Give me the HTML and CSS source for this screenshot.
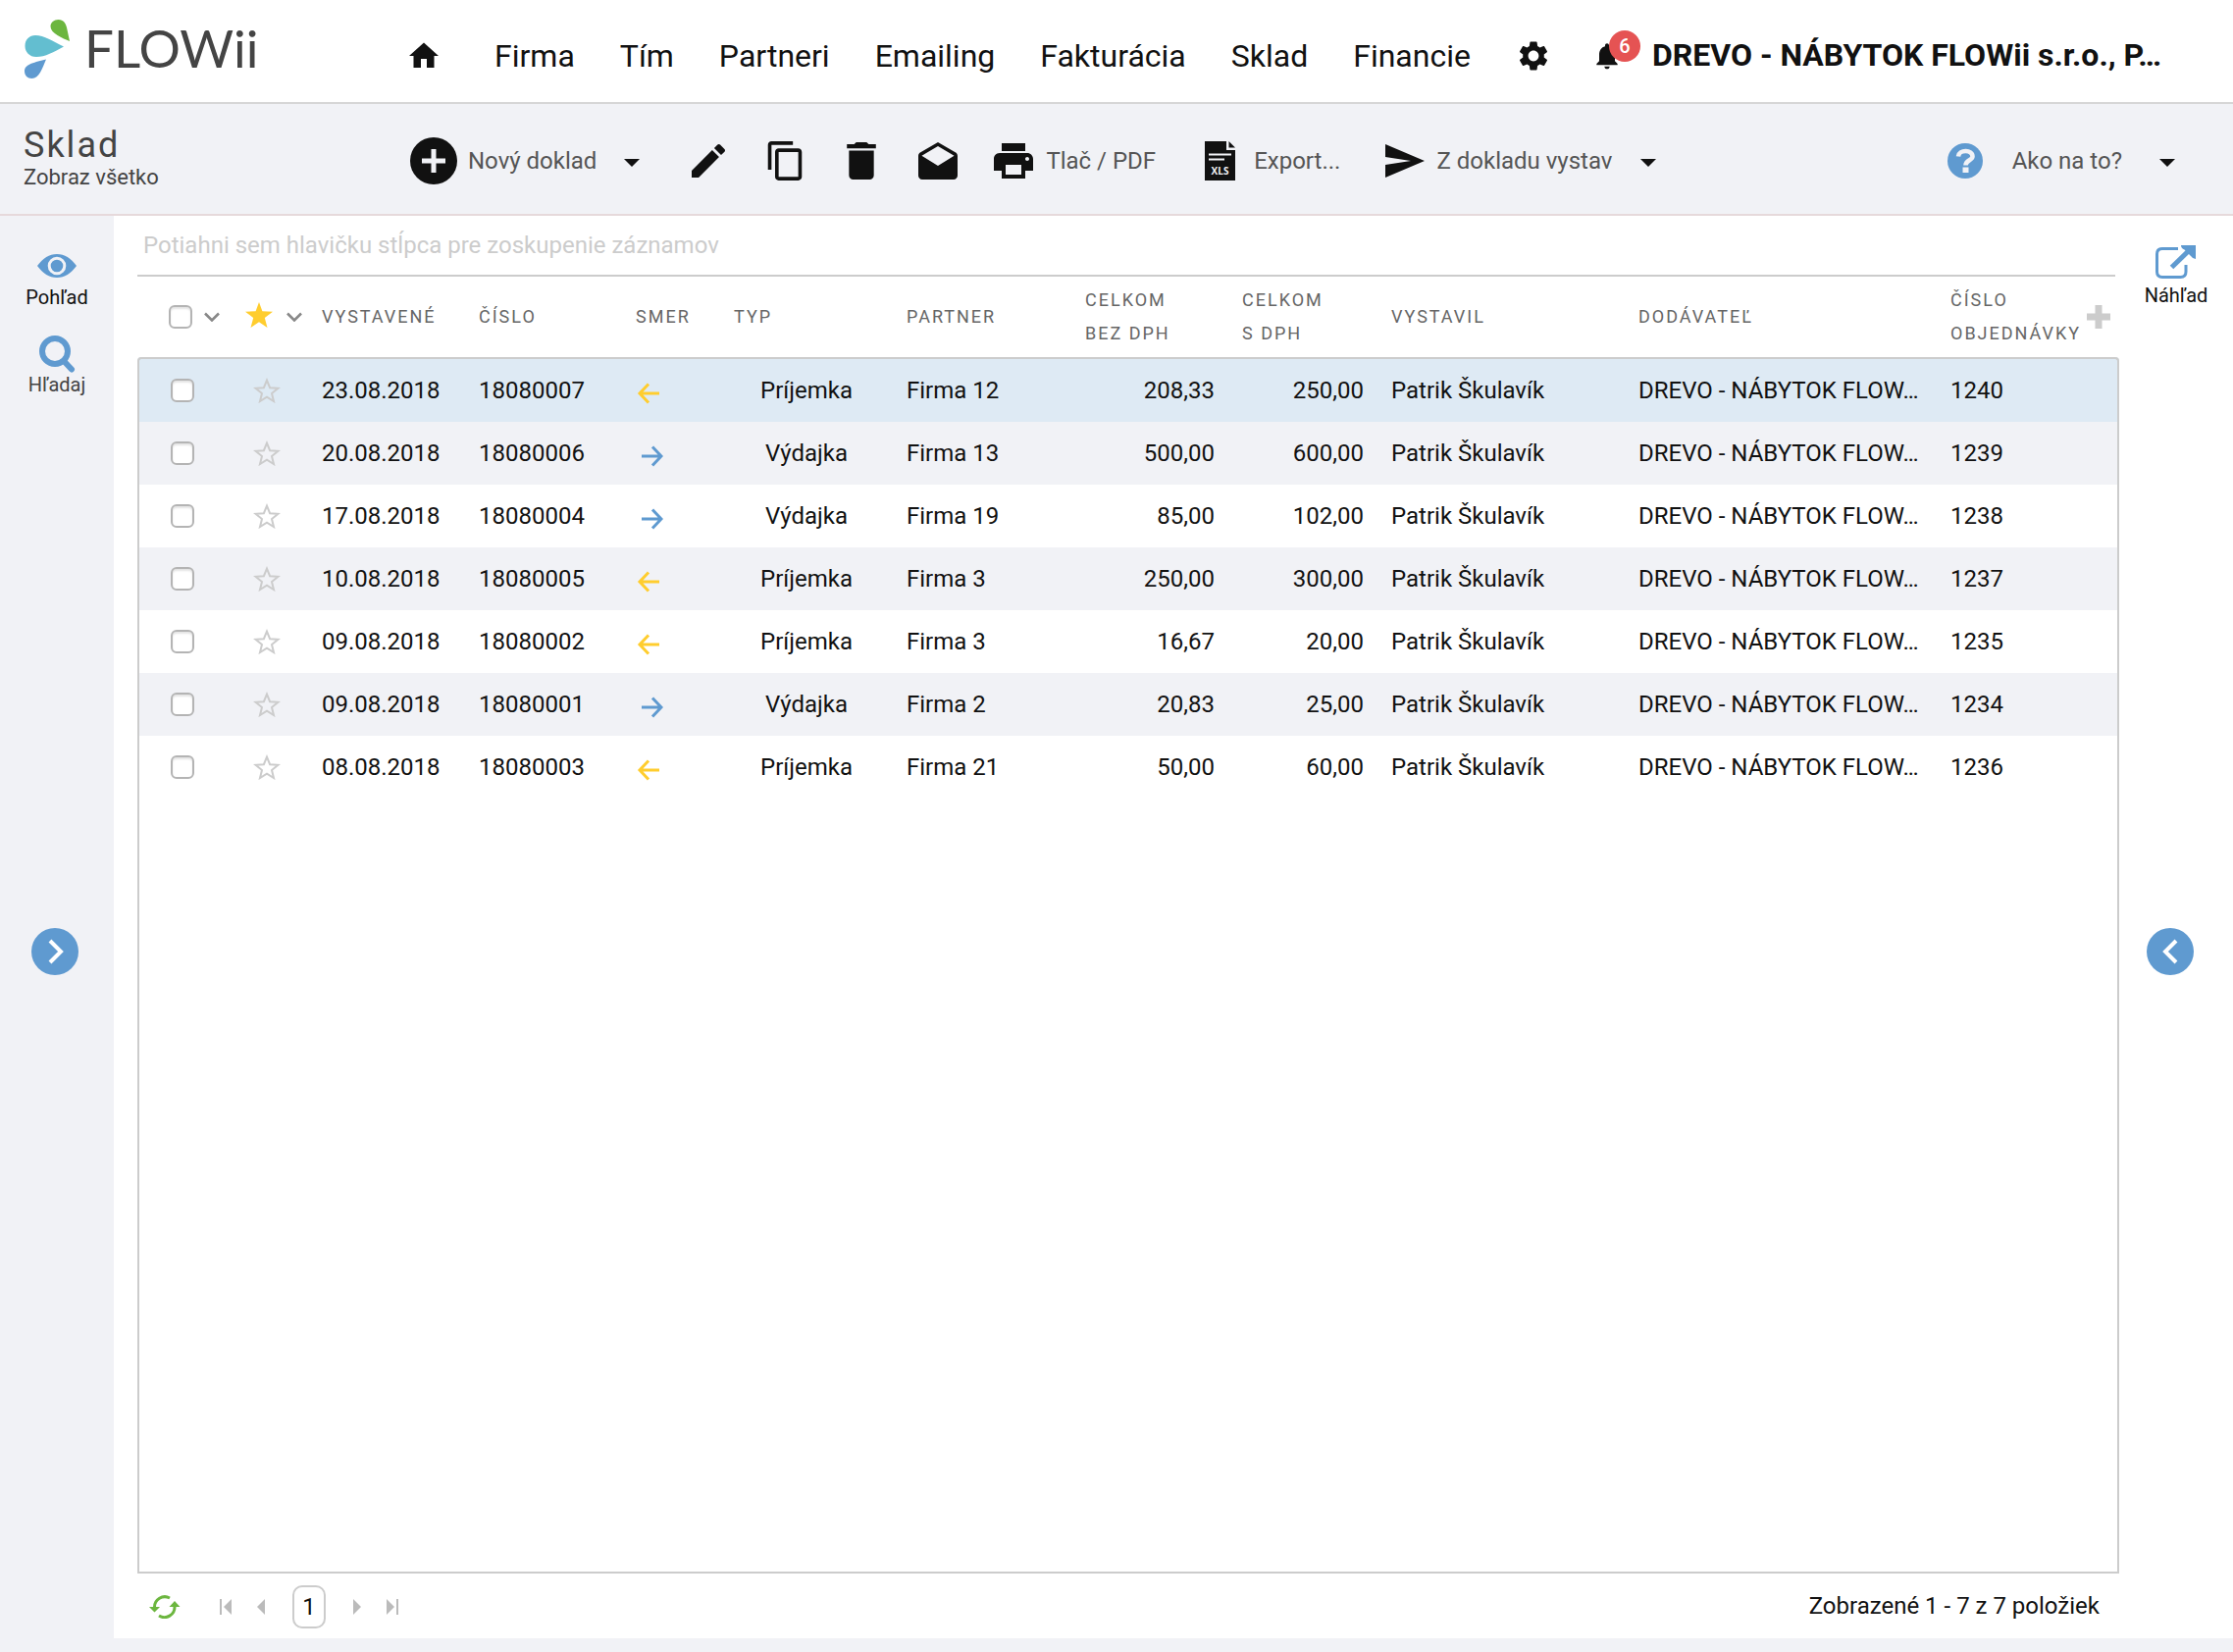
FILE: index.html
```html
<!DOCTYPE html>
<html lang="sk">
<head>
<meta charset="utf-8">
<title>Sklad</title>
<meta name="viewport" content="width=device-width, initial-scale=1">
<link rel="stylesheet" href="styles.css">
</head>
<body>
<svg class="sprite" aria-hidden="true">
  <symbol id="star" viewBox="0 0 28 26"><path d="M14 2.6 17.1 10.2 25.4 10.8 19 16 21 24 14 19.6 7 24 9 16 2.6 10.8 10.9 10.2Z" fill="none" stroke="#ccc" stroke-width="2"/></symbol>
  <symbol id="in" viewBox="0 0 28 28"><path d="M24 17H4M13 7.500 4 17 13 26.500" fill="none" stroke="#ffcd2e" stroke-width="3"/></symbol>
  <symbol id="out" viewBox="0 0 28 28"><path d="M6 17H26M17 7.500 26 17 17 26.500" fill="none" stroke="#5f9ad0" stroke-width="3"/></symbol>
  <symbol id="chevron" viewBox="0 0 16 10"><path d="M1 1.5 8 8.5 15 1.5" fill="none" stroke="#888" stroke-width="2.6"/></symbol>
  <symbol id="caret" viewBox="0 0 16 8"><path d="M0 0H16L8 8Z" fill="#111"/></symbol>
</svg>

<header class="topbar">
  <a class="brand" href="#">
    <svg width="244" height="72" viewBox="0 0 244 72" role="img" aria-label="FLOWii">
      <path d="M47 22C40 19 27.500 14 27.500 7C27.500 3 31 0 35.500 0C41 0 43 4 44 8Z" fill="#6cb63f"/>
      <path d="M41 27.500C31 33 22 38 13 38C6 38 1.500 33 1.500 27C1.500 20 6 16 12 16C21 16 30 22 41 27.500Z" fill="#63bed0"/>
      <path d="M23 40.500C19 50 16 60 8.500 60C4 60 1 57 1 52.500C1 45 12 43.500 23 40.500Z" fill="#5f9ad0"/>
      <text class="brand-text" x="62" y="49">FLOWii</text>
    </svg>
  </a>
  <nav class="nav">
    <a class="nav-home" href="#" aria-label="Domov"><svg width="36" height="36" viewBox="0 0 24 24"><path d="M10 20v-6h4v6h5v-8h3L12 3 2 12h3v8z"/></svg></a>
    <a href="#">Firma</a>
    <a href="#">Tím</a>
    <a href="#">Partneri</a>
    <a href="#">Emailing</a>
    <a href="#">Fakturácia</a>
    <a href="#">Sklad</a>
    <a href="#">Financie</a>
    <a href="#" aria-label="Nastavenia"><svg width="36" height="36" viewBox="0 0 24 24"><path d="M19.140 12.940c.04-.3.06-.61.06-.94 0-.32-.02-.64-.07-.94l2.030-1.580c.18-.14.23-.41.12-.61l-1.920-3.320c-.12-.22-.37-.29-.59-.22l-2.390.96c-.5-.38-1.030-.7-1.620-.94l-.36-2.540c-.04-.24-.24-.41-.48-.41h-3.840c-.24 0-.43.17-.47.41l-.36 2.540c-.59.24-1.130.57-1.620.94l-2.390-.96c-.22-.08-.47 0-.59.22L2.740 8.870c-.12.21-.08.47.12.61l2.030 1.580c-.05.3-.09.63-.09.94s.02.64.07.94l-2.030 1.580c-.18.14-.23.41-.12.61l1.920 3.320c.12.22.37.29.59.22l2.390-.96c.5.38 1.030.7 1.620.94l.36 2.540c.05.24.24.41.48.41h3.840c.24 0 .44-.17.47-.41l.36-2.540c.59-.24 1.130-.56 1.620-.94l2.390.96c.22.08.47 0 .59-.22l1.920-3.320c.12-.22.07-.47-.12-.61l-2.010-1.580zM12 15.600c-1.980 0-3.600-1.620-3.600-3.600s1.620-3.600 3.600-3.600 3.600 1.620 3.600 3.600-1.620 3.600-3.600 3.600z"/></svg></a>
  </nav>
  <a class="bell" href="#" aria-label="Upozornenia"><svg width="32" height="32" viewBox="0 0 24 24"><path d="M12 22c1.100 0 2-.9 2-2h-4c0 1.100.89 2 2 2zm6-6v-5c0-3.070-1.640-5.640-4.500-6.320V4c0-.83-.67-1.500-1.500-1.500s-1.500.67-1.500 1.500v.68C7.630 5.360 6 7.920 6 11v5l-2 2v1h16v-1l-2-2z"/></svg><span class="badge">6</span></a>
  <a class="account" href="#">DREVO - NÁBYTOK FLOWii s.r.o., P…</a>
</header>

<section class="toolbar">
  <div class="heading">
    <h1>Sklad</h1>
    <p>Zobraz všetko</p>
  </div>
  <div class="actions">
    <button class="tool tool-new" type="button">
      <svg width="48" height="48" viewBox="0 0 48 48"><circle cx="24" cy="24" r="24"/><path d="M24 12V36M12 24H36" stroke="#f1f2f6" stroke-width="5"/></svg>
      <span>Nový doklad</span>
      <svg class="caret" width="16" height="8"><use href="#caret"/></svg>
    </button>
    <button class="tool-icon" type="button" aria-label="Upraviť"><svg width="34" height="34" viewBox="3 3 18 18"><path d="M3 17.250V21h3.750L17.810 9.940l-3.750-3.750L3 17.250zM20.710 7.040c.39-.39.39-1.020 0-1.410l-2.340-2.340c-.39-.39-1.020-.39-1.410 0l-1.830 1.830 3.750 3.750 1.830-1.830z"/></svg></button>
    <button class="tool-icon" type="button" aria-label="Kopírovať"><svg width="36" height="40" viewBox="2 1 19 22"><path d="M16 1H4c-1.100 0-2 .9-2 2v14h2V3h12V1zm3 4H8c-1.100 0-2 .9-2 2v14c0 1.100.9 2 2 2h11c1.100 0 2-.9 2-2V7c0-1.100-.9-2-2-2zm0 16H8V7h11v14z"/></svg></button>
    <button class="tool-icon" type="button" aria-label="Vymazať"><svg width="30" height="38" viewBox="5 3 14 18"><path d="M6 19c0 1.100.9 2 2 2h8c1.100 0 2-.9 2-2V7H6v12zM19 4h-3.500l-1-1h-5l-1 1H5v2h14V4z"/></svg></button>
    <button class="tool-icon" type="button" aria-label="Odoslať e-mailom"><svg width="40" height="38" viewBox="2 1 20 19"><path d="M21.990 8c0-.72-.37-1.350-.94-1.700L12 1 2.950 6.300C2.380 6.650 2 7.280 2 8v10c0 1.100.9 2 2 2h16c1.100 0 2-.9 2-2l-.01-10zM12 13 3.740 7.840 12 3l8.260 4.840L12 13z"/></svg></button>
    <button class="tool tool-print" type="button">
      <svg width="40" height="36" viewBox="2 3 20 18"><path d="M19 8H5c-1.660 0-3 1.340-3 3v6h4v4h12v-4h4v-6c0-1.660-1.340-3-3-3zm-3 11H8v-5h8v5zm3-7c-.55 0-1-.45-1-1s.45-1 1-1 1 .45 1 1-.45 1-1 1zm-1-9H6v4h12V3z"/></svg>
      <span>Tlač / PDF</span>
    </button>
    <button class="tool tool-export" type="button">
      <svg width="31" height="40" viewBox="0 0 31 40"><path d="M0 0H22V9H31V40H0Z"/><path d="M24.500 0 31 6.500H24.500Z"/><path d="M4 13.500H27M4 18.500H20" stroke="#f1f2f6" stroke-width="2"/><text class="xls" x="15.500" y="34" text-anchor="middle">XLS</text></svg>
      <span>Export...</span>
    </button>
    <button class="tool tool-send" type="button">
      <svg width="40" height="34" viewBox="0 0 40 34"><path d="M0 0 40 17 0 34V21L26 17 0 13Z"/></svg>
      <span>Z dokladu vystav</span>
      <svg class="caret" width="16" height="8"><use href="#caret"/></svg>
    </button>
  </div>
  <button class="tool tool-help" type="button">
    <svg width="36" height="36" viewBox="0 0 36 36"><circle cx="18" cy="18" r="18" fill="#5f9ad0"/><path d="M11 13.500C11.500 6.500 25.500 6 25.500 13.500C25.500 17.500 18.500 17 18.500 22.500" fill="none" stroke="#f1f2f6" stroke-width="4.600"/><path d="M15.500 24.500H21.500V30H15.500Z" fill="#f1f2f6"/></svg>
    <span>Ako na to?</span>
    <svg class="caret" width="16" height="8"><use href="#caret"/></svg>
  </button>
</section>

<div class="workspace">
  <aside class="side side-left">
    <button class="side-item" type="button">
      <svg width="40" height="32" viewBox="0 0 40 32"><path d="M0 12C6 4 12 0 20 0S34 4 40 12C34 20 28 24 20 24S6 20 0 12Z" fill="#5f9ad0"/><circle cx="20" cy="12" r="7.800" fill="#5f9ad0" stroke="#f1f2f6" stroke-width="3"/></svg>
      <span>Pohľad</span>
    </button>
    <button class="side-item side-muted" type="button">
      <svg width="38" height="38" viewBox="0 0 38 38"><circle cx="17" cy="16" r="13" fill="none" stroke="#5f9ad0" stroke-width="6"/><path d="M27 27 34 34.500" stroke="#5f9ad0" stroke-width="6" stroke-linecap="round"/></svg>
      <span>Hľadaj</span>
    </button>
  </aside>

  <main class="content">
    <p class="group-hint">Potiahni sem hlavičku stĺpca pre zoskupenie záznamov</p>
    <table class="grid">
      <colgroup>
        <col class="w-check"><col class="w-star"><col class="w-date"><col class="w-date"><col class="w-dir"><col class="w-type"><col class="w-partner"><col class="w-net"><col class="w-gross"><col class="w-author"><col><col class="w-order">
      </colgroup>
      <thead>
        <tr>
          <th><div class="head-tools"><input class="check" type="checkbox" aria-label="Označiť všetko"><svg width="16" height="10"><use href="#chevron"/></svg></div></th>
          <th><div class="head-tools head-star"><svg width="28" height="30" viewBox="0 0 28 30"><path d="M14 0 17.400 9.200 28 9.800 19.800 16 22.500 26 14 20.300 5.500 26 8.200 16 0 9.800 10.600 9.200Z" fill="#ffcd2e"/></svg><svg width="16" height="10"><use href="#chevron"/></svg></div></th>
          <th>VYSTAVENÉ</th>
          <th>ČÍSLO</th>
          <th>SMER</th>
          <th>TYP</th>
          <th>PARTNER</th>
          <th>CELKOM<br>BEZ DPH</th>
          <th>CELKOM<br>S DPH</th>
          <th>VYSTAVIL</th>
          <th>DODÁVATEĽ</th>
          <th><div class="head-last"><span>ČÍSLO<br>OBJEDNÁVKY</span><button type="button" aria-label="Pridať stĺpec"><svg width="26" height="26" viewBox="0 0 26 26"><path d="M13 1V25M1 13H25" stroke="#ccc" stroke-width="7"/></svg></button></div></th>
        </tr>
      </thead>
      <tbody>
        <tr class="selected"><td class="mid"><input class="check" type="checkbox" aria-label="Označiť 18080007"></td><td class="mid"><svg width="28" height="26"><use href="#star"/></svg></td><td>23.08.2018</td><td>18080007</td><td><svg width="28" height="28"><use href="#in"/></svg></td><td class="mid">Príjemka</td><td>Firma 12</td><td class="num">208,33</td><td class="num">250,00</td><td>Patrik Škulavík</td><td>DREVO - NÁBYTOK FLOW…</td><td>1240</td></tr>
        <tr><td class="mid"><input class="check" type="checkbox" aria-label="Označiť 18080006"></td><td class="mid"><svg width="28" height="26"><use href="#star"/></svg></td><td>20.08.2018</td><td>18080006</td><td><svg width="28" height="28"><use href="#out"/></svg></td><td class="mid">Výdajka</td><td>Firma 13</td><td class="num">500,00</td><td class="num">600,00</td><td>Patrik Škulavík</td><td>DREVO - NÁBYTOK FLOW…</td><td>1239</td></tr>
        <tr><td class="mid"><input class="check" type="checkbox" aria-label="Označiť 18080004"></td><td class="mid"><svg width="28" height="26"><use href="#star"/></svg></td><td>17.08.2018</td><td>18080004</td><td><svg width="28" height="28"><use href="#out"/></svg></td><td class="mid">Výdajka</td><td>Firma 19</td><td class="num">85,00</td><td class="num">102,00</td><td>Patrik Škulavík</td><td>DREVO - NÁBYTOK FLOW…</td><td>1238</td></tr>
        <tr><td class="mid"><input class="check" type="checkbox" aria-label="Označiť 18080005"></td><td class="mid"><svg width="28" height="26"><use href="#star"/></svg></td><td>10.08.2018</td><td>18080005</td><td><svg width="28" height="28"><use href="#in"/></svg></td><td class="mid">Príjemka</td><td>Firma 3</td><td class="num">250,00</td><td class="num">300,00</td><td>Patrik Škulavík</td><td>DREVO - NÁBYTOK FLOW…</td><td>1237</td></tr>
        <tr><td class="mid"><input class="check" type="checkbox" aria-label="Označiť 18080002"></td><td class="mid"><svg width="28" height="26"><use href="#star"/></svg></td><td>09.08.2018</td><td>18080002</td><td><svg width="28" height="28"><use href="#in"/></svg></td><td class="mid">Príjemka</td><td>Firma 3</td><td class="num">16,67</td><td class="num">20,00</td><td>Patrik Škulavík</td><td>DREVO - NÁBYTOK FLOW…</td><td>1235</td></tr>
        <tr><td class="mid"><input class="check" type="checkbox" aria-label="Označiť 18080001"></td><td class="mid"><svg width="28" height="26"><use href="#star"/></svg></td><td>09.08.2018</td><td>18080001</td><td><svg width="28" height="28"><use href="#out"/></svg></td><td class="mid">Výdajka</td><td>Firma 2</td><td class="num">20,83</td><td class="num">25,00</td><td>Patrik Škulavík</td><td>DREVO - NÁBYTOK FLOW…</td><td>1234</td></tr>
        <tr><td class="mid"><input class="check" type="checkbox" aria-label="Označiť 18080003"></td><td class="mid"><svg width="28" height="26"><use href="#star"/></svg></td><td>08.08.2018</td><td>18080003</td><td><svg width="28" height="28"><use href="#in"/></svg></td><td class="mid">Príjemka</td><td>Firma 21</td><td class="num">50,00</td><td class="num">60,00</td><td>Patrik Škulavík</td><td>DREVO - NÁBYTOK FLOW…</td><td>1236</td></tr>
      </tbody>
    </table>
    <div class="grid-rest"></div>
    <footer class="pager">
      <button class="refresh" type="button" aria-label="Obnoviť"><svg width="32" height="24" viewBox="0 0 32 24"><path d="M21 3A10.500 10.500 0 0 0 5.500 12.500M10 21A10.500 10.500 0 0 0 26 11.500" fill="none" stroke="#6cb63f" stroke-width="3"/><path d="M0 12H11L5.500 17.500ZM20.500 12H31.500L26 6Z" fill="#6cb63f"/></svg></button>
      <button type="button" aria-label="Prvá strana"><svg width="12" height="16" viewBox="0 0 12 16"><path d="M0 0H2V16H0ZM12 0V16L4 8Z"/></svg></button>
      <button type="button" aria-label="Predchádzajúca strana"><svg width="8" height="16" viewBox="0 0 8 16"><path d="M8 0V16L0 8Z"/></svg></button>
      <button class="page" type="button">1</button>
      <button type="button" aria-label="Nasledujúca strana"><svg width="8" height="16" viewBox="0 0 8 16"><path d="M0 0V16L8 8Z"/></svg></button>
      <button type="button" aria-label="Posledná strana"><svg width="12" height="16" viewBox="0 0 12 16"><path d="M10 0H12V16H10ZM0 0V16L8 8Z"/></svg></button>
      <span class="summary">Zobrazené 1 - 7 z 7 položiek</span>
    </footer>
  </main>

  <aside class="side side-right">
    <button class="side-item" type="button">
      <svg width="42" height="40" viewBox="0 0 42 40"><path d="M23 4.500H7Q1.500 4.500 1.500 10V28Q1.500 33.500 7 33.500H25.500Q31 33.500 31 28V21" fill="none" stroke="#5f9ad0" stroke-width="3"/><path d="M16.500 23.500 34 6.500" stroke="#5f9ad0" stroke-width="5"/><path d="M26 1H41V15Q38 15 36 12L29.500 5.500Q26 4 26 1Z" fill="#5f9ad0"/></svg>
      <span>Náhľad</span>
    </button>
  </aside>

  <button class="handle handle-left" type="button" aria-label="Rozbaliť ľavý panel"><svg width="48" height="48" viewBox="0 0 48 48"><path d="M19 13 30 24 19 35"/></svg></button>
  <button class="handle handle-right" type="button" aria-label="Rozbaliť pravý panel"><svg width="48" height="48" viewBox="0 0 48 48"><path d="M30 13 19 24 30 35"/></svg></button>
</div>
</body>
</html>
```
FILE: styles.css
```css
* { box-sizing: border-box; }

body {
  margin: 0;
  min-height: 100vh;
  display: flex;
  flex-direction: column;
  background: #f1f2f6;
  color: #111;
  font-family: Roboto, "Liberation Sans", sans-serif;
  font-size: 24px;
  line-height: 32px;
}

h1, p { margin: 0; font-weight: 400; }
a { color: inherit; text-decoration: none; }
svg { display: block; flex: none; }

button {
  margin: 0;
  padding: 0;
  border: 0;
  background: none;
  color: inherit;
  font: inherit;
  cursor: pointer;
}

.sprite { position: absolute; width: 0; height: 0; }

/* Top navigation */
.topbar {
  display: flex;
  align-items: center;
  min-height: 106px;
  padding-top: 8px;
  border-bottom: 2px solid #d6d6d6;
  background: #fff;
  font-size: 32px;
  line-height: 40px;
}
.brand { flex: none; width: 414px; padding-left: 24px; }
.brand svg { overflow: visible; }
.brand-text { font-family: Lato, sans-serif; font-size: 53px; fill: #444; }
.nav { display: flex; align-items: center; gap: 46px; padding-top: 2px; fill: #111; }
.nav-home { margin-right: 8px; }
.bell { position: relative; margin-left: 41px; padding-top: 2px; fill: #111; }
.badge {
  position: absolute;
  top: -8px;
  left: 18px;
  width: 32px;
  height: 32px;
  border-radius: 50%;
  background: #e55353;
  color: #fff;
  font-size: 20px;
  font-weight: 500;
  line-height: 32px;
  text-align: center;
}
.account { margin-left: 30px; font-weight: 700; white-space: nowrap; }

/* Document toolbar */
.toolbar {
  display: flex;
  align-items: center;
  min-height: 114px;
  padding-top: 4px;
  border-bottom: 2px solid #e6d9db;
  color: #555;
}
.heading { flex: none; width: 418px; padding: 0 0 4px 24px; color: #444; }
.heading h1 { font-size: 36px; line-height: 38px; letter-spacing: 2px; }
.heading p { font-size: 22px; line-height: 28px; }
.actions { display: flex; align-items: center; fill: #111; }
.tool { display: flex; align-items: center; gap: 11px; white-space: nowrap; }
.tool .caret { margin-left: 17px; margin-top: 4px; }
.tool-new { margin-right: 31px; }
.tool-icon { display: flex; justify-content: center; width: 78px; }
.tool-print { padding-left: 18px; gap: 13px; }
.tool-export { margin-left: 50px; gap: 19px; }
.tool-send { margin-left: 46px; gap: 12px; }
.tool-help { margin: 0 59px 0 auto; gap: 30px; }
.tool-help .caret { margin-left: 8px; }
.xls { font-family: "Open Sans", sans-serif; font-size: 10px; font-weight: 700; fill: #f1f2f6; }

/* Panels around the grid */
.workspace { position: relative; flex: 1; display: flex; }
.side { flex: none; width: 116px; display: flex; flex-direction: column; gap: 27px; font-size: 20px; line-height: 24px; }
.side-left { padding-top: 39px; }
.side-right { padding-top: 29px; margin-bottom: 14px; background: #fff; }
.side-item { display: flex; flex-direction: column; align-items: center; }
.side-muted { color: #444; }
.handle {
  position: absolute;
  top: calc(50% - 6px);
  border-radius: 50%;
  background: #5f9ad0;
}
.handle path { fill: none; stroke: #fff; stroke-width: 4; }
.handle-left { left: 32px; }
.handle-right { right: 40px; }

/* Records grid */
.content {
  flex: 1;
  min-width: 0;
  display: flex;
  flex-direction: column;
  margin-bottom: 14px;
  padding-left: 24px;
  background: #fff;
}
.group-hint {
  margin-right: 4px;
  padding: 14px 6px;
  border-bottom: 2px solid #ccc;
  color: #ccc;
}
.grid { width: 100%; table-layout: fixed; border-spacing: 0; }
.w-check { width: 90px; }
.w-star { width: 84px; }
.w-date, .w-net { width: 160px; }
.w-dir { width: 100px; }
.w-type { width: 176px; }
.w-partner { width: 182px; }
.w-gross { width: 152px; }
.w-author { width: 252px; }
.w-order { width: 186px; }

.grid th {
  height: 82px;
  padding: 0 0 0 14px;
  color: #666;
  font-size: 18px;
  font-weight: 400;
  line-height: 34px;
  letter-spacing: 2px;
  text-align: left;
  white-space: nowrap;
}
.head-tools { display: flex; align-items: center; gap: 12px; padding-left: 18px; }
.head-star { padding-left: 6px; gap: 14px; }
.head-last { display: flex; align-items: center; justify-content: space-between; padding-right: 8px; }

.grid td { height: 64px; padding: 0 14px; white-space: nowrap; overflow: hidden; text-overflow: ellipsis; }
.grid td:first-child { border-left: 2px solid #ccc; }
.grid td:last-child { border-right: 2px solid #ccc; }
.grid tbody tr:first-child td { height: 66px; border-top: 2px solid #ccc; }
.grid tbody tr:first-child td:first-child { border-top-left-radius: 4px; }
.grid tbody tr:first-child td:last-child { border-top-right-radius: 4px; }
.grid tbody tr { background: #fff; }
.grid tbody tr:nth-child(even) { background: #f1f2f6; }
.grid tbody tr.selected { background: #deeaf4; }
.grid .num { text-align: right; }
.grid .mid { text-align: center; }
.mid svg, .mid .check { margin: 0 auto; }

.check {
  appearance: none;
  display: block;
  width: 24px;
  height: 24px;
  margin: 0;
  border: 2px solid #b4b4b4;
  border-radius: 6px;
  background: #fff;
  box-shadow: inset 0 2px 2px #e4e4e4;
}
.grid-rest { flex: 1; border: 2px solid #ccc; border-top: 0; }

/* Pager */
.pager { display: flex; align-items: center; height: 66px; padding: 2px 20px 0 12px; fill: #bbb; }
.refresh { margin-right: 40px; }
.pager button + button { margin-right: 26px; }
.pager button + .page {
  width: 34px;
  height: 44px;
  border: 2px solid #ccc;
  border-radius: 10px;
  margin: 0 28px 0 2px;
}
.summary { margin-left: auto; padding-bottom: 2px; }
```
